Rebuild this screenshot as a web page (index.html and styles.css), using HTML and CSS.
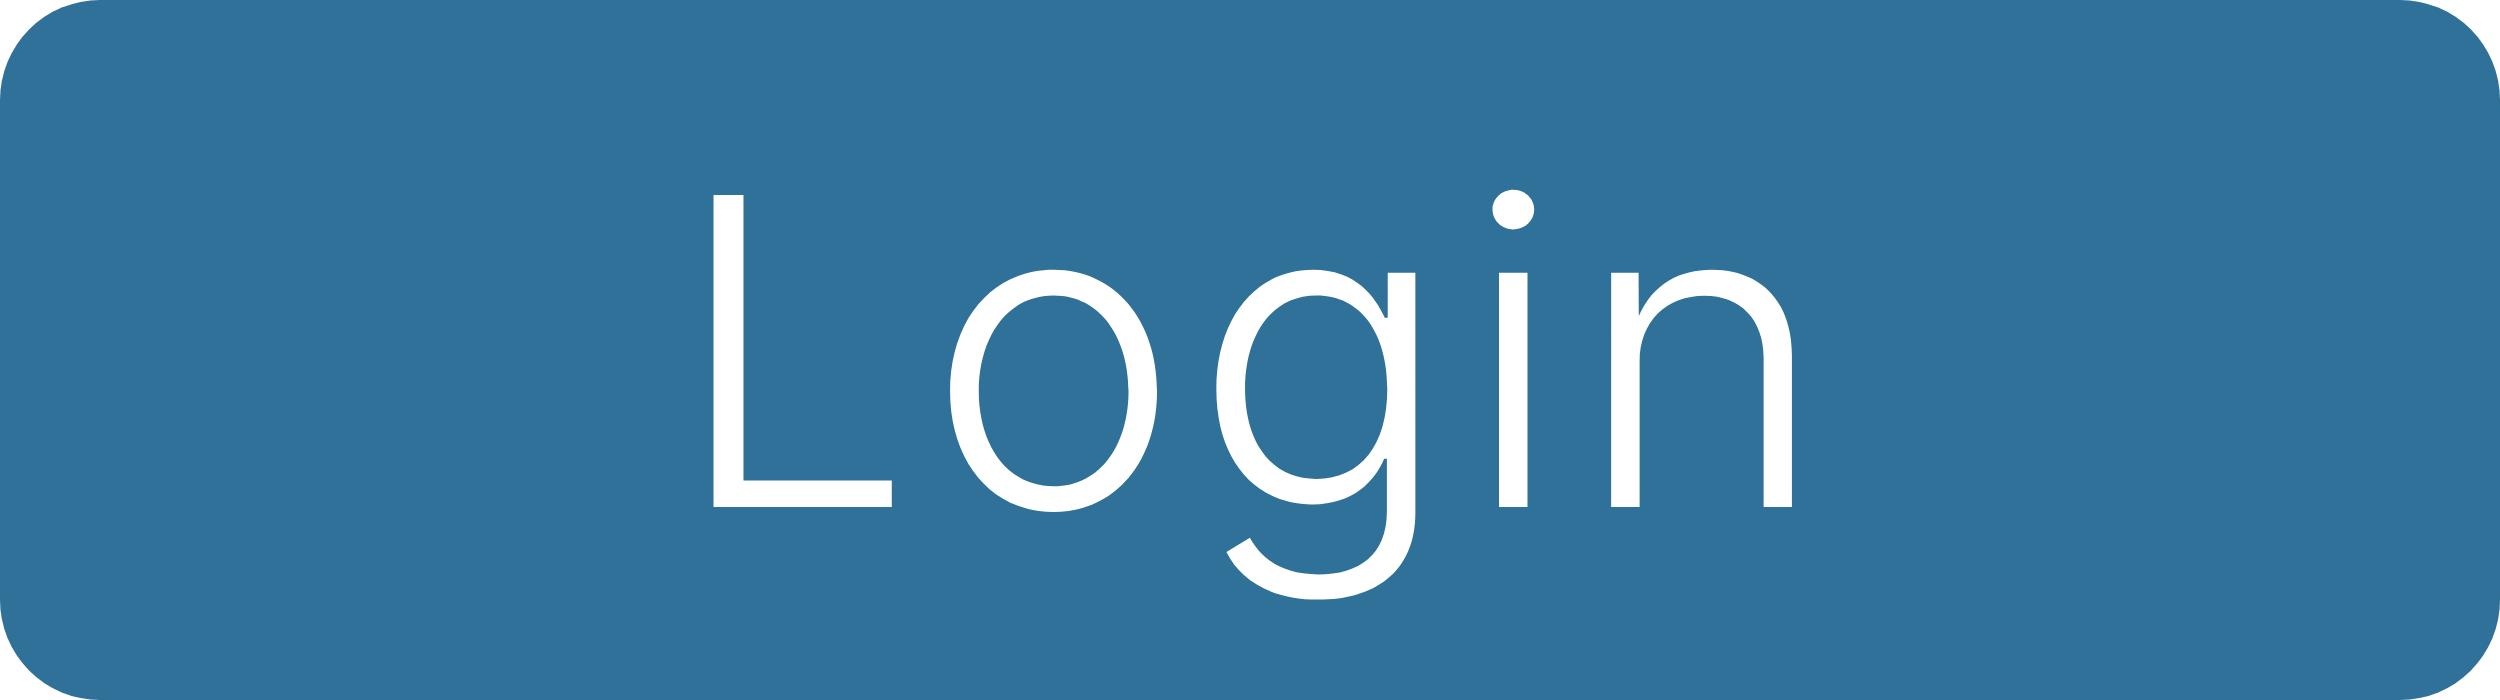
FILE: index.html
```html
<!DOCTYPE html>
<html lang="en">
<head>
<meta charset="utf-8">
<title>Login</title>
<link rel="stylesheet" href="styles.css">
</head>
<body>
<div class="login-button"><span class="label">Login</span></div>
</body>
</html>
```
FILE: styles.css
```css
html, body {
  margin: 0;
  padding: 0;
  background: #ffffff;
}
.login-button {
  width: 2500px;
  height: 700px;
  box-sizing: border-box;
  background: #2f7199;
  border-radius: 100px;
  display: flex;
  align-items: center;
  justify-content: center;
}
.label {
  font-family: "Inter", "Noto Sans", sans-serif;
  font-weight: 330;
  font-size: 429px;
  line-height: 1;
  letter-spacing: 12px;
  padding-left: 12px;
  color: #ffffff;
}
```
